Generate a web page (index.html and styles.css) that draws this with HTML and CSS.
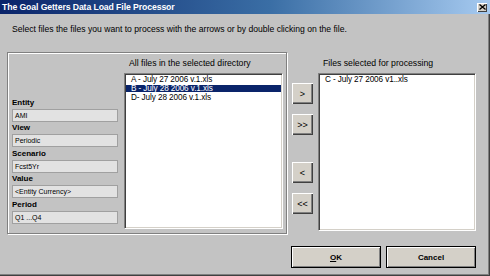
FILE: index.html
```html
<!DOCTYPE html>
<html lang="en">

<head>
    <meta charset="UTF-8" />
    <title>The Goal Getters Data Load File Processor</title>
    <link rel="stylesheet" href="styles.css">
</head>

<body>

    <div class="window">
        <div class="title-bar">
            <span class="title-text">The Goal Getters Data Load File Processor</span>
            <button class="close-btn" title="Close">
                <svg width="7" height="6" viewBox="0 0 7 6">
                    <path d="M0.5 0.5 L6.5 5.5 M6.5 0.5 L0.5 5.5" stroke="#000" stroke-width="1.3" fill="none" />
                </svg>
            </button>
        </div>

        <p class="prompt">Select files the files you want to process with the arrows or by double clicking on the file.</p>

        <div class="main">
            <div class="group-box">
                <div class="fields">
                    <div class="field-label">Entity</div>
                    <div class="field">AMI</div>
                    <div class="field-label">View</div>
                    <div class="field">Periodic</div>
                    <div class="field-label">Scenario</div>
                    <div class="field">Fcst5Yr</div>
                    <div class="field-label">Value</div>
                    <div class="field">&lt;Entity Currency&gt;</div>
                    <div class="field-label">Period</div>
                    <div class="field">Q1 ...Q4</div>
                </div>

                <div class="list-column">
                    <div class="list-label">All files in the selected directory</div>
                    <ul class="list-box">
                        <li>A - July 27 2006 v.1.xls</li>
                        <li class="selected">B - July 28 2006 v.1.xls</li>
                        <li>D- July 28 2006 v.1.xls</li>
                    </ul>
                </div>
            </div>

            <div class="arrow-column">
                <div class="arrow-group">
                    <button class="arrow-btn">&gt;</button>
                    <button class="arrow-btn">&gt;&gt;</button>
                </div>
                <div class="arrow-group">
                    <button class="arrow-btn">&lt;</button>
                    <button class="arrow-btn">&lt;&lt;</button>
                </div>
            </div>

            <div class="list-column right-column">
                <div class="list-label">Files selected for processing</div>
                <ul class="list-box">
                    <li>C - July 27 2006 v1..xls</li>
                </ul>
            </div>
        </div>

        <div class="footer">
            <button class="dialog-btn"><u>O</u>K</button>
            <button class="dialog-btn">Cancel</button>
        </div>
    </div>

</body>

</html>
```

FILE: styles.css
```css
body {
    margin: 0;
    padding: 0;
    background: #c3c3c3;
    font-family: "Liberation Sans", Arial, sans-serif;
    overflow: hidden;
}

.window {
    width: 490px;
    height: 276px;
    box-sizing: border-box;
    background: #c3c3c3;
    box-shadow: inset -1px -1px #404040, inset -2px -2px #808080;
    display: flex;
    flex-direction: column;
}

.title-bar {
    height: 14px;
    background: linear-gradient(90deg, #0a246a 0%, #3a6ea5 55%, #a6caf0 100%);
    display: flex;
    justify-content: space-between;
    align-items: center;
    padding: 0 3px 0 2px;
}

.title-text {
    color: white;
    font-weight: bold;
    font-size: 8.7px;
    line-height: 14px;
    letter-spacing: -0.1px;
}

.close-btn {
    width: 10px;
    height: 9px;
    padding: 0;
    border: none;
    background: #d4d0c8;
    box-shadow: inset 1px 1px #fff, inset -1px -1px #404040;
    display: flex;
    align-items: center;
    justify-content: center;
}

.prompt {
    margin: 10px 0 0 12px;
    font-size: 8.6px;
    line-height: 10px;
    color: #000;
}

.main {
    display: flex;
    margin-top: 18px;
    padding-left: 7px;
}

.group-box {
    width: 280px;
    height: 182px;
    box-sizing: border-box;
    border: 1px solid #808080;
    box-shadow: inset 1px 1px #fff, 1px 1px #fff;
    display: flex;
    padding: 0 3px 0 4px;
}

.fields {
    width: 106px;
    display: flex;
    flex-direction: column;
    justify-content: flex-end;
    padding-bottom: 9px;
}

.field-label {
    font-size: 8px;
    font-weight: bold;
    line-height: 12px;
    color: #000;
}

.field {
    height: 13px;
    box-sizing: border-box;
    border: 1px solid #a0a0a0;
    background: #e2e2e2;
    font-size: 7px;
    line-height: 11px;
    padding-left: 2px;
    color: #000;
    margin-bottom: 0.5px;
}

.list-column {
    margin-left: 6px;
    display: flex;
    flex-direction: column;
    padding: 5px 0 4px;
    flex: 1;
}

.list-label {
    font-size: 8.7px;
    line-height: 11px;
    padding-left: 5px;
    margin-bottom: 4px;
    color: #000;
}

.list-box {
    flex: 1;
    margin: 0;
    padding: 0;
    list-style: none;
    background: white;
    border: 1px solid;
    border-color: #808080 #fff #fff #808080;
    box-shadow: inset 1px 1px #404040, inset -1px -1px #d4d0c8;
    padding: 1px;
}

.list-box li {
    font-size: 8.2px;
    line-height: 9px;
    padding-left: 5px;
    letter-spacing: -0.1px;
    color: #000;
}

.list-box li.selected {
    background: #0a246a;
    color: white;
    box-shadow: inset 0 1px #fff, inset 0 -1px #fff;
}

.arrow-column {
    margin-left: 5px;
    padding-top: 31px;
    display: flex;
    flex-direction: column;
    gap: 27px;
}

.arrow-group {
    display: flex;
    flex-direction: column;
    gap: 10px;
}

.arrow-btn {
    width: 21px;
    height: 21px;
    padding: 0;
    border: none;
    background: #d4d0c8;
    box-shadow: inset 1px 1px #fff, inset -1px -1px #404040, inset -2px -2px #808080;
    font-family: "Liberation Sans", Arial, sans-serif;
    font-size: 9px;
    color: #000;
}

.right-column {
    flex: none;
    width: 158px;
    margin-left: 5px;
    padding: 6px 0 3px;
}

.footer {
    display: flex;
    justify-content: flex-end;
    gap: 5px;
    margin-top: 12px;
    padding-right: 14px;
}

.dialog-btn {
    width: 90px;
    height: 22px;
    padding: 0;
    border: 1px solid #000;
    background: #d4d0c8;
    box-shadow: inset 1px 1px #fff, inset -1px -1px #808080;
    font-family: "Liberation Sans", Arial, sans-serif;
    font-size: 8px;
    font-weight: bold;
    color: #000;
}
```
